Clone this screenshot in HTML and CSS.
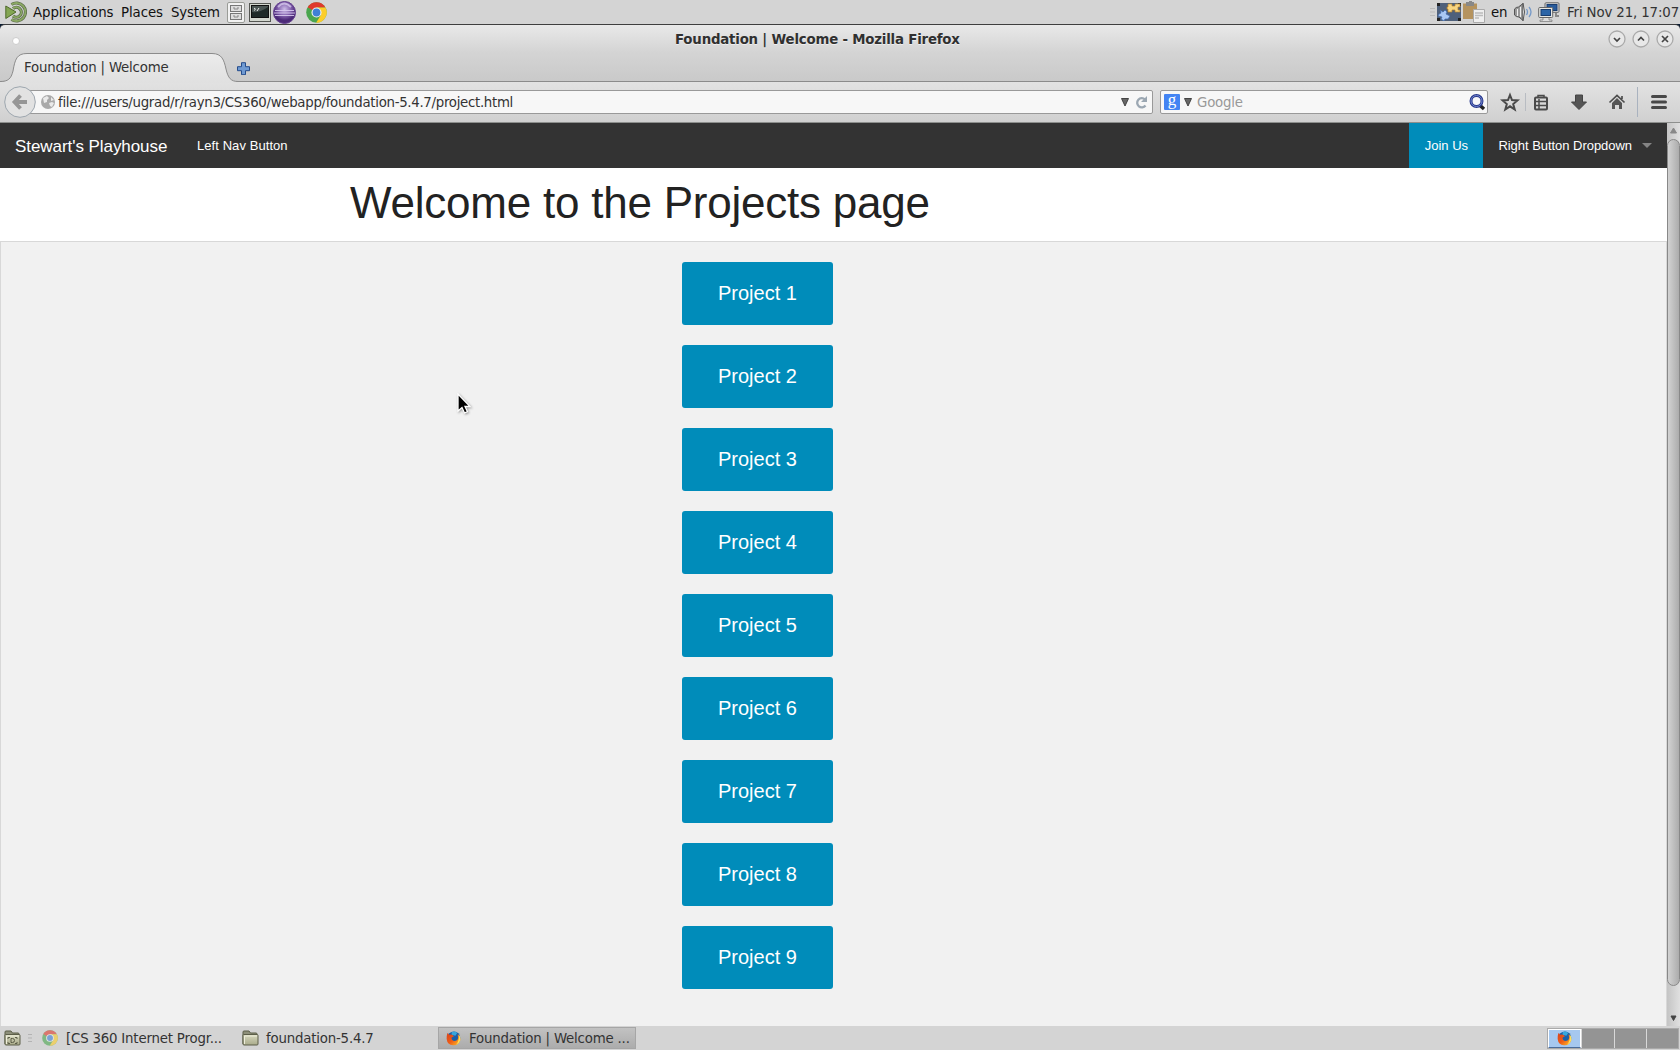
FILE: index.html
```html
<!DOCTYPE html>
<html lang="en">
<head>
<meta charset="utf-8">
<title>Foundation | Welcome</title>
<link rel="stylesheet" href="styles.css">
</head>
<body>
<svg width="0" height="0" class="defs">
  <defs>
    <radialGradient id="orb" cx=".5" cy=".35"><stop offset="0" stop-color="#cdbde8"/><stop offset=".6" stop-color="#8361ad"/><stop offset="1" stop-color="#4c2a78"/></radialGradient>
    <linearGradient id="folderfill" x2="0" y2="1"><stop offset="0" stop-color="#d8d9bf"/><stop offset="1" stop-color="#a9ab8b"/></linearGradient>
    <linearGradient id="flame" x2="1" y2="1"><stop offset="0" stop-color="#d8421c"/><stop offset=".5" stop-color="#ee5b16"/><stop offset="1" stop-color="#fdc52d"/></linearGradient>
    <symbol id="chrome" viewBox="0 0 20 20">
      <circle cx="10" cy="10" r="9.8" fill="#4aa64e"/>
      <path d="M10 10 1.500 5.100A9.800 9.800 0 0 1 18.500 5.200H10z" fill="#e0392c"/>
      <path d="M10 5.200h8.500A9.800 9.800 0 0 1 9.600 19.800L14.200 12.400z" fill="#fccd2b"/>
      <circle cx="10" cy="10" r="4.8" fill="#f2f2f2"/><circle cx="10" cy="10" r="3.7" fill="#3f80d5"/>
    </symbol>
    <symbol id="firefox" viewBox="0 0 16 16">
      <circle cx="8.4" cy="7.3" r="6.8" fill="#1b5fa8"/>
      <path d="M6 1.3Q9-.5 12 2L10 5 6 4z" fill="#36a6dd"/>
      <path d="M1.5 2 3.5 4Q5 3.2 6.5 4L8.5 5.6 6 7Q5.6 9.8 8.6 10.6 12.3 10.7 13 7.2L12.2 3.5Q15.6 6 15.2 9.8A7.4 7.4 0 0 1 .7 8.6Q.5 5 1.5 2z" fill="url(#flame)"/>
      <path d="M13.4 3.5Q16 6.3 15.2 9.8 14 13.5 10.5 14.7 14.5 11 13.4 3.5z" fill="#fee15a"/>
    </symbol>
    <symbol id="folder" viewBox="0 0 17 16">
      <path d="M1 14V2Q1 1 2 1h5l1.500 2H14q1 0 1 1v1" fill="#8e907a" stroke="#5c5e49"/>
      <path d="M1 5q0-.5.500-.5H15q1 0 1 1V14q0 1-1 1H2q-1 0-1-1z" fill="url(#folderfill)" stroke="#5c5e49"/>
      <path d="M2.500 14V6H15" fill="none" stroke="#eeeedb"/>
    </symbol>
  </defs>
</svg>

<header class="desk-panel">
  <svg class="mate" width="22" height="22" viewBox="0 0 22 22"><g fill="none"><path d="M6.500 3.500A9 9 0 1 1 6.500 18.500M8 7.500a5 5 0 1 1 0 7.500" stroke="#5b6a48" stroke-width="3.200"/><path d="M6.500 3.500A9 9 0 1 1 6.500 18.500M8 7.500a5 5 0 1 1 0 7.500" stroke="#8aa864" stroke-width="1.800"/></g><path d="M.8 5 11 11 .8 17.500z" fill="#84a653" stroke="#4f6a2c"/></svg>
  <span class="menu apps">Applications</span><span class="menu places">Places</span><span class="menu system">System</span>
  <svg class="cabinet" width="18" height="21" viewBox="0 0 18 21"><rect x=".5" y=".5" width="17" height="20" rx="1.500" fill="#f2f2f2" stroke="#9a9c97"/><rect x="3.500" y="3.500" width="11" height="6" fill="#ddd" stroke="#777"/><rect x="3.500" y="11.500" width="11" height="6" fill="#ddd" stroke="#777"/><path d="M7 5v2h4V5m-4 8v2h4v-2" fill="none" stroke="#888"/></svg>
  <svg class="term" width="22" height="19" viewBox="0 0 22 19"><rect x=".5" y=".5" width="21" height="18" fill="#d3d7cf" stroke="#555753"/><rect x="2.500" y="2.500" width="17" height="12" fill="#1f2a28" stroke="#111"/><path d="M3 9Q11 10 19 4V3H3z" fill="#4b5654"/><path d="m5 5 1.500 1.200L5 7.500M8 8l2-3" fill="none" stroke="#eee"/></svg>
  <svg class="eclipse" width="23" height="23" viewBox="0 0 23 23"><circle cx="11.500" cy="11.500" r="11" fill="url(#orb)" stroke="#664291"/><path d="M2 9.500h19M1 12h21M2 14.500h19" stroke="#d8c9ef" stroke-width=".9"/><path d="M5 6Q11-1 18 6" fill="none" stroke="#eee6ff" stroke-width="2" opacity=".6"/></svg>
  <svg class="chrome" width="21" height="21"><use href="#chrome"/></svg>
  <span class="fill"></span>
  <svg class="grip" width="5" height="9"><path d="M0 .5h5M0 4h5M0 7.500h5" stroke="#bbb"/></svg>
  <svg class="puzzle" width="24" height="18" viewBox="0 0 24 18"><rect width="24" height="18" fill="#4e607b"/><path d="M0 0h3v3H0zm21 0h3v3h-3zM0 15h3v3H0zm21 0h3v3h-3z" fill="#222"/><path d="M11 1h4v2h3V1h5v3h-2v3h2v2h-5V7h-3v2h-4V6h-1V4h1z" fill="#f7d582" stroke="#b5822c" stroke-width=".7"/><path d="m3 7 3 2 2-2 2 2-1 2 4 2-2 3H8l-1 2-3-2 1-2-4-1 1-2 2-1z" fill="#a9c8f4" stroke="#3e69ae" stroke-width=".7"/></svg>
  <svg class="clip" width="22" height="22" viewBox="0 0 22 22"><path d="M0 2.500h14V18H0z" fill="#b5935e"/><path d="M3 1h3V0h3v1h2v4H3z" fill="#888"/><path d="M10.500 8.500h11v13h-11z" fill="#eee" stroke="#aaa"/><path d="M12 12h8m-8 2.500h8M12 17h4" stroke="#bbb" stroke-width="1.500"/></svg>
  <span class="lang">en</span>
  <svg class="sound" width="19" height="20" viewBox="0 0 19 20"><path d="M.5 7q1.500-2 4-2L9 1.500v17L5 15Q2 15 .500 13z" fill="#999" stroke="#555"/><path d="M3.500 7v7M6.500 5v10" stroke="#eee"/><path d="M9 1q3 9 0 18" fill="#ddd" stroke="#555"/><path d="M12.500 7q2 3 0 6m2.500-8q4 5 0 10" fill="none" stroke="#7599c8" stroke-width="1.300"/></svg>
  <svg class="network" width="22" height="20" viewBox="0 0 22 20"><rect x="7" y=".8" width="14" height="9.500" rx="1" fill="#ddd" stroke="#666"/><rect x="9" y="2.500" width="10" height="6" fill="#285b9b" stroke="#183d70"/><path d="M18 11v3h3" stroke="#888" fill="none" stroke-width="2"/><rect x=".7" y="5.500" width="14" height="10" rx="1" fill="#e6e6e1" stroke="#666"/><rect x="3" y="7.500" width="9.500" height="6" fill="#2c65a7" stroke="#183d70"/><path d="M5 16v2H2v1.500h12V18h-3v-2" fill="#ddd" stroke="#777" stroke-width=".7"/></svg>
  <span class="clock">Fri Nov 21, 17:07</span>
</header>

<div class="window">
  <div class="titlebar">
    <span class="dot"></span>
    <span class="title">Foundation | Welcome - Mozilla Firefox</span>
    <div class="controls">
      <svg width="18" height="18"><circle cx="9" cy="9" r="8" /><path d="m6 8 3 3 3-3"/></svg>
      <svg width="18" height="18"><circle cx="9" cy="9" r="8"/><path d="m6 10.500 3-3 3 3"/></svg>
      <svg width="18" height="18"><circle cx="9" cy="9" r="8"/><path d="m6 6 6 6m0-6-6 6"/></svg>
    </div>
  </div>
  <div class="tabs">
    <div class="tab">
      <svg class="tab-shape" width="238" height="30" viewBox="0 0 238 30"><defs><linearGradient id="tabfill" x2="0" y2="1"><stop offset="0" stop-color="#ececec"/><stop offset="1" stop-color="#e0e0e0"/></linearGradient></defs><path d="M0 28.500C8 28.500 11 26 13 18 15 6 17 .5 27 .5H212C222 .500 224 7 226 16 228 25 231 28.500 238 28.500V30H0z" fill="url(#tabfill)"/><path d="M0 28.500C8 28.500 11 26 13 18 15 6 17 .5 27 .5H212C222 .500 224 7 226 16 228 25 231 28.500 238 28.500" fill="none" stroke="#8b8b8b"/></svg>
      <span class="tab-label">Foundation | Welcome</span>
    </div>
    <svg class="plus" width="13" height="13"><path d="M4.500.7h4v4h4v4h-4v4h-4v-4h-4v-4h4z" fill="#6f9ad2" stroke="#244c8c"/></svg>
  </div>
  <div class="toolbar">
    <svg class="back" width="32" height="32"><circle cx="16" cy="16" r="15.300" fill="#e2e2e2" stroke="#9da6ae"/><path d="M10 16h13M16.500 9.500 10.500 16l6 6.500" fill="none" stroke="#969696" stroke-width="3.800"/></svg>
    <div class="address">
      <svg width="14" height="14"><circle cx="7" cy="7" r="7" fill="#a9a9a9"/><path d="M2 3 6 1l2 2-2 2v2L3 8zm6 5 3-1 2 1-2 4-2-1zM10 2l3 3-3 1z" fill="#eaeaea"/></svg>
      <span class="url">file:///users/ugrad/r/rayn3/CS360/webapp/foundation-5.4.7/project.html</span>
      <svg class="drop" width="8" height="9"><path d="M.5.5h7L4 8z" fill="#666" stroke="#444"/></svg>
      <svg class="reload" width="13" height="13"><path d="M10 3.500A4.600 4.600 0 1 0 10.500 9.500" fill="none" stroke="#9ba7b2" stroke-width="2.300"/><path d="M12 0v6H6z" fill="#9ba7b2"/></svg>
    </div>
    <div class="search">
      <span class="g">g</span>
      <svg class="drop2" width="8" height="9"><path d="M.5.5h7L4 8z" fill="#666" stroke="#444"/></svg>
      <span class="hint">Google</span>
      <svg width="17" height="17"><path d="m10.500 11 4.500 4" stroke="#222" stroke-width="3.500"/><circle cx="7.500" cy="7" r="5.500" fill="#f7f7fa" stroke="#28398c" stroke-width="3"/><circle cx="7.500" cy="7" r="5.500" fill="none" stroke="#7384ce"/></svg>
    </div>
    <svg class="tools" width="176" height="34" viewBox="0 0 176 34">
      <g fill="none" stroke="#4a4a4a" stroke-width="2"><path d="m10 10 2 5 5.500.4-4.300 3.600 1.500 5.500L10 21.300l-4.700 3.200 1.500-5.500-4.300-3.600L8 15z"/><rect x="35" y="12.500" width="12" height="12" rx="1"/><path d="M38 12V10.500h6V12M35 16.500h12m-12 4h12M39 14v10" stroke-width="1.500"/></g>
      <path d="M25.500 8v18" stroke="#b8bcc2"/><path d="M75.500 10h7v7h4l-7.500 7.500-7.500-7.500h4z" fill="#555" stroke="#444"/>
      <path d="m109.500 17.500 7.500-7 7.500 7M122 11v3" fill="none" stroke="#4d4d4d" stroke-width="1.700"/><path d="m117 13 5 5v6h-3v-4h-4v4h-3v-6z" fill="#555"/>
      <path d="M137.500 2v30" stroke="#a9b2bf"/><path d="M152.500 11.500h13m-13 5.500h13m-13 5.500h13" stroke="#484848" stroke-width="3" stroke-linecap="round"/>
    </svg>
  </div>

  <div class="viewport">
    <div class="page">
      <nav class="topbar">
        <span class="brand">Stewart's Playhouse</span><span class="left">Left Nav Button</span>
        <span class="join"><span>Join Us</span></span>
        <span class="right">Right Button Dropdown</span><i class="caret"></i>
      </nav>
      <h1><span>Welcome to the Projects page</span></h1>
      <main class="projects">
        <a class="button">Project 1</a>
        <a class="button">Project 2</a>
        <a class="button">Project 3</a>
        <a class="button">Project 4</a>
        <a class="button">Project 5</a>
        <a class="button">Project 6</a>
        <a class="button">Project 7</a>
        <a class="button">Project 8</a>
        <a class="button">Project 9</a>
      </main>
    </div>
    <div class="scrollbar">
      <svg width="13" height="16"><path d="M3.500 10h6l-3-5z" fill="#888" stroke="#888"/></svg>
      <div class="thumb"></div>
      <svg width="13" height="16"><path d="M4 6h5l-2.500 4.500z" fill="#444" stroke="#444"/></svg>
    </div>
  </div>
</div>

<footer class="taskbar">
  <svg class="desk" width="17" height="16"><use href="#folder"/><path d="M4 9V7.500h2m5 0h2V9m0 3v1.500h-2m-5 0H4V12M7 8.500h1.500q2 0 2 2t-2 2H7z" fill="none" stroke="#5c5e49"/></svg>
  <svg class="task-grip" width="4" height="8"><path d="M0 .5h4M0 4h4M0 7.500h4" stroke="#b3b3b3"/></svg>
  <div class="task one"><svg class="faded" width="16" height="16"><use href="#chrome"/></svg><span>[CS 360 Internet Progr...</span></div>
  <div class="task two"><svg width="17" height="16"><use href="#folder"/></svg><span>foundation-5.4.7</span></div>
  <div class="task active"><svg width="15" height="15"><use href="#firefox"/></svg><span>Foundation | Welcome ...</span></div>
  <div class="pager"><div class="desk-on"><svg width="15" height="15"><use href="#firefox"/></svg></div><div></div><div></div><div></div></div>
</footer>

<svg class="cursor" width="16" height="24" viewBox="0 0 16 24"><path d="M1 1v17l4-3.500 2.500 5.500 3-1.300-2.500-5.200h5z" fill="#000" stroke="#fff" stroke-width="1.300"/></svg>
</body>
</html>
```
FILE: styles.css
```css
* { box-sizing: border-box; }
body { margin: 0; width: 1680px; height: 1050px; overflow: hidden; display: flex; flex-direction: column; background: #0b1c33; font: 13.33px "DejaVu Sans", sans-serif; letter-spacing: -.19px; color: #333; }
svg { display: block; flex: none; }
span { white-space: nowrap; }
.defs { position: absolute; }

/* desktop panel */
.desk-panel { height: 24px; flex: none; display: flex; align-items: center; background: #d4d4d4; padding-left: 5px; color: #111; letter-spacing: -.08px; }
.menu { flex: none; }
.apps { width: 88px; margin-left: 6px; }
.places { width: 50px; }
.system { width: 56px; letter-spacing: -.15px; }
.term { margin-left: 4px; }
.eclipse { margin-left: 2px; }
.desk-panel .chrome { margin-left: 10px; }
.fill { flex: 1; }
.puzzle { margin-left: 2px; }
.clip { margin-left: 2px; }
.lang { width: 17px; margin: 0 6px; }
.network { margin-left: 5px; }
.clock { width: 113px; margin-left: 7px; color: #333; letter-spacing: -.13px; }

/* browser window */
.window { height: 1002px; flex: none; display: flex; flex-direction: column; border-top: 1px solid #3f3f3f; border-radius: 5px 5px 0 0; overflow: hidden; background: linear-gradient(#e9e9e9, #d4d4d4 27px, #c9c9c9 57px); }
.titlebar { height: 28px; flex: none; display: flex; align-items: center; padding: 0 6px 0 12px; }
.dot { width: 8px; height: 8px; border-radius: 50%; background: #fff; border: 1px solid #ccc; margin-top: 4px; }
.title { font-weight: bold; margin-left: 655px; color: #303030; text-shadow: 0 1px #eee; margin-top: 1px; }
.controls { margin-left: auto; display: flex; gap: 6px; }
.controls svg { fill: #e8e8e8; stroke: #aaa; stroke-width: 1.3; }
.controls path { stroke: #444; stroke-width: 1.7; fill: none; }
.tabs { height: 29px; flex: none; display: flex; border-bottom: 1px solid #8b8b8b; }
.tab { width: 238px; height: 30px; display: grid; z-index: 1; }
.tab > * { grid-area: 1 / 1; }
.tab-label { padding: 7px 0 0 24px; }
.plus { margin: 9px 0 0 -1px; }
.toolbar { height: 41px; flex: none; display: flex; align-items: center; background: linear-gradient(#e2e2e2, #d0d0d0); border-bottom: 1px solid #8d8f8d; padding-left: 4px; }
.back { z-index: 1; }
.address { width: 1124px; height: 24px; margin-left: -7px; border: 1px solid #999; border-radius: 0 2px 2px 0; background: #f7f7f7; display: flex; align-items: center; padding-left: 11px; }
.url { margin: 1px 0 0 3px; letter-spacing: -.3px; }
.drop { margin-left: auto; }
.reload { margin: 0 4px 0 6px; }
.search { width: 328px; height: 24px; margin-left: 7px; border: 1px solid #999; border-radius: 2px; background: #f7f7f7; display: flex; align-items: center; padding: 0 1px 0 3px; }
.g { width: 16px; height: 16px; background: #4384f3; border-radius: 1px; color: #fff; font: 17px/11px "Liberation Serif", serif; text-align: center; }
.drop2 { margin-left: 4px; }
.hint { color: #999; margin: 1px auto 0 5px; }
.tools { margin-left: 12px; }

/* web page */
.viewport { height: 903px; flex: none; display: flex; letter-spacing: 0; }
.page { width: 1667px; background: #fff; font-family: "Liberation Sans", Arial, sans-serif; }
.topbar { height: 45px; background: #333; color: #fff; display: flex; align-items: center; font-size: 13px; padding-left: 15px; }
.brand { width: 182px; font-size: 17px; letter-spacing: -.06px; padding-top: 2px; }
.left { letter-spacing: .07px; }
.join { width: 74px; height: 45px; background: #008cba; margin-left: auto; display: flex; align-items: center; justify-content: center; }
.right { margin-left: 15px; letter-spacing: -.04px; }
.caret { border: 5px solid transparent; border-top-color: #858585; border-bottom: 0; margin: 0 15px 0 10px; }
h1 { margin: 0; height: 73px; padding-left: 350px; font-size: 44px; font-weight: normal; line-height: 70px; letter-spacing: -.23px; color: #222; }
.projects { height: 785px; border: 1px solid #d8d8d8; border-bottom: 0; background: #f1f1f1; padding: 20px 0 0 681px; display: flex; flex-direction: column; gap: 20px; }
.button { width: 151px; height: 63px; border-radius: 3px; background: #008cba; color: #fff; font-size: 20px; line-height: 62px; padding-left: 36px; white-space: nowrap; }
.scrollbar { width: 13px; background: linear-gradient(90deg, #c4c4c4, #e0e0e0); display: flex; flex-direction: column; }
.thumb { flex: 1; border: 1px solid #888; border-radius: 7px; background: linear-gradient(90deg, #d2d2d2, #acacac); margin-bottom: 24px; }

/* bottom task list */
.taskbar { height: 24px; flex: none; display: flex; align-items: center; background: #d4d4d4; padding-left: 4px; }
.task-grip { margin-left: 7px; }
.faded { opacity: .6; }
.task { display: flex; align-items: center; height: 22px; }
.one { width: 200px; margin-left: 10px; gap: 8px; }
.two { width: 196px; gap: 7px; }
.active { width: 198px; padding: 1px 0 0 7px; gap: 8px; background: linear-gradient(#c2c2c2, #acacac); border: 1px solid #a6a6a6; }
.pager { margin-left: auto; width: 132px; height: 21px; display: flex; gap: 1px; background: #d8d8d8; border: 1px solid #aaa; margin-right: 1px; }
.pager div { flex: 1; background: #949494; display: flex; justify-content: center; align-items: center; }
.pager .desk-on { background: #a6c8ef; border: 1px solid #fff; border-bottom-color: #4a6c9b; }

/* mouse pointer floats over the page */
.cursor { position: absolute; left: 457px; top: 393px; filter: drop-shadow(1px 1px 1px #999); }
```
